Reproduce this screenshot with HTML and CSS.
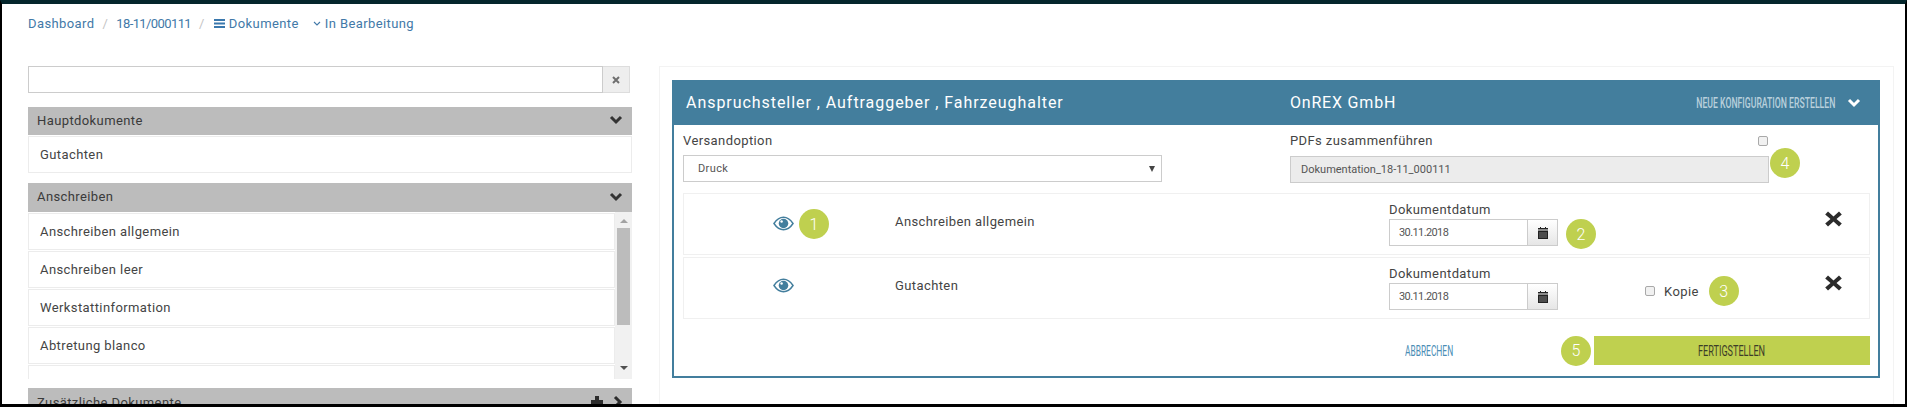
FILE: index.html
```html
<!DOCTYPE html>
<html lang="de">
<head>
  <meta charset="UTF-8" />
  <title>Dokumente</title>
  <link rel="stylesheet" href="styles.css">
</head>
<body>
  <div class="frame">
    <div class="breadcrumb">
      <a>Dashboard</a>
      <span class="sep">/</span>
      <a class="tight">18-11/000111</a>
      <span class="sep">/</span>
      <svg class="bars" viewBox="0 0 11 9"><path d="M0 0h11v2H0zM0 3.5h11v2H0zM0 7h11v2H0z"/></svg>
      <a>Dokumente</a>
      <svg class="caret" viewBox="0 0 8 5"><path d="M1 1l3 3 3-3" fill="none" stroke="currentColor" stroke-width="1.1"/></svg>
      <a>In Bearbeitung</a>
    </div>

    <div class="content">
      <div class="sidebar">
        <div class="search">
          <input class="search-input" type="text" />
          <span class="search-btn">
            <svg viewBox="0 0 8 8"><path d="M1 1l6 6M7 1L1 7" stroke="#6f6f6f" stroke-width="2"/></svg>
          </span>
        </div>

        <div class="group-head first">
          <span>Hauptdokumente</span>
          <svg class="chev" viewBox="0 0 14 10"><path d="M2 2l5 5 5-5" fill="none" stroke="currentColor" stroke-width="3"/></svg>
        </div>
        <div class="doc-item">Gutachten</div>

        <div class="group-head second">
          <span>Anschreiben</span>
          <svg class="chev" viewBox="0 0 14 10"><path d="M2 2l5 5 5-5" fill="none" stroke="currentColor" stroke-width="3"/></svg>
        </div>
        <div class="doc-scroll">
          <div class="doc-list">
            <div class="doc-item">Anschreiben allgemein</div>
            <div class="doc-item">Anschreiben leer</div>
            <div class="doc-item">Werkstattinformation</div>
            <div class="doc-item">Abtretung blanco</div>
            <div class="doc-item"></div>
          </div>
          <div class="scrollbar">
            <span class="arrow-up"></span>
            <span class="thumb"></span>
            <span class="arrow-down"></span>
          </div>
        </div>

        <div class="group-head third">
          <span>Zusätzliche Dokumente</span>
          <span class="head-icons">
            <svg class="plus" viewBox="0 0 12 12"><path d="M4 0h4v4h4v4H8v4H4V8H0V4h4z"/></svg>
            <svg class="chev-right" viewBox="0 0 10 14"><path d="M2 2l5 5-5 5" fill="none" stroke="currentColor" stroke-width="3"/></svg>
          </span>
        </div>
      </div>

      <div class="panel">
        <div class="box">
          <div class="box-head">
            <div class="box-title">Anspruchsteller , Auftraggeber , Fahrzeughalter</div>
            <div class="box-company">OnREX GmbH</div>
            <div class="box-new"><span class="condensed">NEUE KONFIGURATION ERSTELLEN</span></div>
            <svg class="box-chev" viewBox="0 0 14 10"><path d="M2 2l5 5 5-5" fill="none" stroke="currentColor" stroke-width="3"/></svg>
          </div>

          <div class="options">
            <div class="opt-left">
              <div class="label">Versandoption</div>
              <div class="select">Druck<span class="select-arrow"></span></div>
            </div>
            <div class="opt-right">
              <div class="label-row">
                <div class="label">PDFs zusammenführen</div>
                <span class="check"></span>
              </div>
              <div class="pdf-row">
                <div class="pdf-name">Dokumentation_18-11_000111</div>
                <span class="badge badge-four">4</span>
              </div>
            </div>
          </div>

          <div class="doc-row">
            <div class="eye-cell">
              <svg class="eye" viewBox="0 0 22 15"><path d="M1 7.5C4 3 7 1 11 1s7 2 10 6.500C18 12 15 14 11 14S4 12 1 7.500z" fill="none" stroke="#437e9d" stroke-width="1.500"/><circle cx="11" cy="7.500" r="5" fill="#437e9d"/><circle cx="9" cy="5.500" r="1.300" fill="#fff"/></svg>
              <span class="badge">1</span>
            </div>
            <div class="doc-name">Anschreiben allgemein</div>
            <div class="date-cell">
              <div class="label">Dokumentdatum</div>
              <div class="date-line">
                <div class="date-value">30.11.2018</div>
                <span class="date-btn">
                  <svg viewBox="0 0 10 12"><path d="M0 3.500h10V12H0zM0 1h2V0h1v1h4V0h1v1h2v1.500H0z" fill="#222"/><path d="M1 6h8M1 8h8M1 10h8" stroke="#fff" stroke-width=".4"/></svg>
                </span>
                <span class="badge">2</span>
              </div>
            </div>
            <div class="copy-cell"></div>
            <svg class="remove" viewBox="0 0 17 16"><path d="M3 .5l5.500 5 5.500-5 2.800 3L11.500 8l5.300 4.500-2.800 3-5.500-5-5.500 5-2.800-3L5.500 8 .2 3.500z" fill="#2b2b2b"/></svg>
          </div>

          <div class="doc-row">
            <div class="eye-cell eye-high">
              <svg class="eye" viewBox="0 0 22 15"><path d="M1 7.500C4 3 7 1 11 1s7 2 10 6.500C18 12 15 14 11 14S4 12 1 7.500z" fill="none" stroke="#437e9d" stroke-width="1.500"/><circle cx="11" cy="7.500" r="5" fill="#437e9d"/><circle cx="9" cy="5.500" r="1.300" fill="#fff"/></svg>
            </div>
            <div class="doc-name">Gutachten</div>
            <div class="date-cell">
              <div class="label">Dokumentdatum</div>
              <div class="date-line">
                <div class="date-value">30.11.2018</div>
                <span class="date-btn">
                  <svg viewBox="0 0 10 12"><path d="M0 3.500h10V12H0zM0 1h2V0h1v1h4V0h1v1h2v1.500H0z" fill="#222"/><path d="M1 6h8M1 8h8M1 10h8" stroke="#fff" stroke-width=".4"/></svg>
                </span>
              </div>
            </div>
            <div class="copy-cell">
              <span class="check"></span>
              <span class="copy-label">Kopie</span>
              <span class="badge">3</span>
            </div>
            <svg class="remove" viewBox="0 0 17 16"><path d="M3 .5l5.500 5 5.500-5 2.800 3L11.500 8l5.300 4.500-2.800 3-5.500-5-5.500 5-2.800-3L5.500 8 .2 3.500z" fill="#2b2b2b"/></svg>
          </div>

          <div class="box-foot">
            <a class="cancel"><span class="condensed">ABBRECHEN</span></a>
            <span class="badge">5</span>
            <div class="finish"><span class="condensed">FERTIGSTELLEN</span></div>
          </div>
        </div>
      </div>
    </div>
  </div>
</body>
</html>
```

FILE: styles.css
```css
* {
  box-sizing: border-box;
}

html,
body {
  margin: 0;
  height: 407px;
  overflow: hidden;
  background: #000;
}

.frame {
  height: 407px;
  background: #fff;
  border-top: 4px solid #04262c;
  border-left: 2px solid #000;
  border-right: 2px solid #000;
  border-bottom: 3px solid #000;
  overflow: hidden;
  font-family: Roboto, sans-serif;
  font-size: 13px;
  letter-spacing: 0.4px;
  color: #444;
}

.breadcrumb {
  display: flex;
  align-items: center;
  height: 40px;
  padding: 0 0 2px 26px;
  color: #4279a8;
}

.tight {
  letter-spacing: -0.6px;
}

.sep {
  margin: 0 8px;
  color: #c4c4c4;
}

.bars {
  width: 11px;
  height: 9px;
  margin: 0 4px 0 1px;
  fill: #3a78ad;
}

.caret {
  width: 8px;
  height: 5px;
  margin: 0 4px 0 14px;
}

.content {
  display: flex;
  align-items: flex-start;
  padding: 22px 11px 0 26px;
}

.sidebar {
  width: 604px;
  flex: none;
  margin-right: 27px;
}

.search {
  display: flex;
  height: 27px;
  width: 602px;
}

.search-input {
  flex: 1;
  border: 1px solid #ccc;
  background: #fff;
}

.search-btn {
  display: flex;
  align-items: center;
  justify-content: center;
  width: 27px;
  background: #eee;
  border: 1px solid #ddd;
  border-left: 0;
}

.search-btn svg {
  width: 8px;
  height: 8px;
}

.group-head {
  display: flex;
  align-items: center;
  justify-content: space-between;
  height: 28px;
  padding: 0 9px 2px;
  background: #bcbcbc;
  color: #3a3a3a;
}

.group-head.first {
  margin-top: 14px;
}

.group-head.second {
  margin-top: 10px;
  height: 29px;
}

.group-head.third {
  margin-top: 9px;
  padding-bottom: 0;
}

.chev {
  width: 14px;
  height: 10px;
  color: #333;
}

.head-icons {
  display: flex;
  align-items: center;
  gap: 10px;
}

.plus {
  width: 12px;
  height: 12px;
  fill: #2d2d2d;
}

.chev-right {
  width: 10px;
  height: 14px;
  color: #2d2d2d;
}

.doc-item {
  display: flex;
  align-items: center;
  height: 37px;
  margin-top: 1px;
  padding-left: 11px;
  border: 1px solid #ececec;
  background: #fff;
}

.doc-scroll {
  display: flex;
  height: 167px;
  overflow: hidden;
}

.doc-list {
  flex: 1;
}

.doc-list .doc-item {
  margin-top: 1px;
  margin-bottom: 1px;
}

.scrollbar {
  display: flex;
  flex-direction: column;
  align-items: center;
  justify-content: space-between;
  width: 17px;
  height: 167px;
  padding: 7px 0 9px;
  background: #f1f1f1;
}

.thumb {
  width: 13px;
  height: 97px;
  margin-top: -1px;
  margin-bottom: auto;
  background: #bcbcbc;
}

.arrow-up,
.arrow-down {
  width: 0;
  height: 0;
  border-left: 4px solid transparent;
  border-right: 4px solid transparent;
}

.arrow-up {
  margin-bottom: 6px;
  border-bottom: 4px solid #a3a3a3;
}

.arrow-down {
  border-top: 4px solid #505050;
}

.panel {
  flex: 1;
  height: 340px;
  padding: 13px 13px 0 12px;
  border: 1px solid #f3f3f3;
  border-bottom: 0;
}

.box {
  height: 298px;
  border: 2px solid #437e9d;
  border-top: 0;
}

.box-head {
  display: flex;
  align-items: center;
  height: 45px;
  margin: 0 -2px;
  padding: 0 19px 0 14px;
  background: #437e9d;
  color: #fff;
}

.box-title {
  width: 604px;
  font-size: 16px;
  letter-spacing: 0.95px;
}

.box-company {
  font-size: 16px;
  letter-spacing: 0.8px;
}

.box-new {
  display: flex;
  justify-content: flex-end;
  margin-left: auto;
  width: 140px;
  color: #b9d0dc;
  font-size: 14px;
  font-weight: 500;
}

.condensed {
  display: inline-block;
  flex: none;
  letter-spacing: 0;
  transform: scaleX(0.6);
  white-space: nowrap;
}

.box-new .condensed {
  transform: scaleX(0.62);
  transform-origin: right center;
}

.box-chev {
  width: 14px;
  height: 10px;
  margin-left: 12px;
}

.options {
  display: flex;
  height: 68px;
  padding-left: 9px;
}

.opt-left {
  width: 607px;
  padding-top: 7px;
}

.label {
  line-height: 18px;
}

.select {
  position: relative;
  display: flex;
  align-items: center;
  width: 479px;
  height: 27px;
  margin-top: 5px;
  padding-left: 14px;
  border: 1px solid #ccc;
  font-size: 11px;
  color: #555;
}

.select-arrow {
  position: absolute;
  right: 6px;
  top: 10px;
  border-left: 3px solid transparent;
  border-right: 3px solid transparent;
  border-top: 6px solid #444;
}

.opt-right {
  position: relative;
  padding-top: 7px;
}

.label-row {
  display: flex;
  align-items: center;
  justify-content: space-between;
  width: 478px;
}

.check {
  flex: none;
  width: 10px;
  height: 10px;
  border: 1px solid #a9a9a9;
  border-radius: 2px;
  background: #f1f1f1;
}

.pdf-row {
  display: flex;
  margin-top: 6px;
}

.pdf-name {
  display: flex;
  align-items: center;
  width: 479px;
  height: 27px;
  padding-left: 10px;
  border: 1px solid #ccc;
  background: #ececec;
  font-size: 11px;
  letter-spacing: 0;
  color: #555;
}

.badge {
  display: flex;
  align-items: center;
  justify-content: center;
  flex: none;
  width: 30px;
  height: 30px;
  border-radius: 50%;
  background: #bfd04f;
  color: #fff;
  font-size: 16px;
  font-weight: 300;
  letter-spacing: 0;
}

.badge-four {
  margin: -8px 0 0 1px;
}

.doc-row {
  display: flex;
  height: 62px;
  margin: 0 8px 2px 9px;
  border: 1px solid #f0f0f0;
}

.eye-cell {
  display: flex;
  align-items: center;
  gap: 5px;
  width: 211px;
  height: 60px;
  padding: 0 0 0 89px;
}

.eye {
  width: 21px;
  height: 15px;
  margin-top: -2px;
}

.eye-high .eye {
  margin-top: -6px;
}

.doc-name {
  width: 494px;
  padding-top: 20px;
}

.date-cell {
  width: 256px;
  padding-top: 7px;
}

.date-line {
  display: flex;
}

.date-value {
  display: flex;
  align-items: center;
  width: 139px;
  height: 27px;
  padding-left: 9px;
  border: 1px solid #ccc;
  font-size: 11px;
  letter-spacing: -0.6px;
  color: #555;
}

.date-btn {
  display: flex;
  align-items: center;
  justify-content: center;
  width: 30px;
  height: 27px;
  border: 1px solid #ccc;
  border-left: 0;
  background: linear-gradient(#fff, #e6e6e6);
}

.date-btn svg {
  width: 10px;
  height: 12px;
}

.date-line .badge {
  margin-left: 8px;
}

.copy-cell {
  display: flex;
  align-items: center;
  width: 180px;
  height: 60px;
  padding-top: 6px;
}

.copy-label {
  margin: 0 10px 0 9px;
}

.remove {
  flex: none;
  width: 17px;
  height: 16px;
  margin-top: 17px;
}

.box-foot {
  display: flex;
  align-items: center;
  height: 29px;
  margin: 17px 8px 0 0;
}

.cancel {
  margin-left: 731px;
  width: 49px;
  color: #4a8db5;
  font-size: 14px;
}

.cancel .condensed {
  transform-origin: left center;
}

.box-foot .badge {
  margin-left: 107px;
}

.finish {
  display: flex;
  align-items: center;
  justify-content: center;
  flex: 1;
  height: 29px;
  margin-left: 3px;
  background: #bfd04f;
  color: #3d3d28;
  font-size: 14px;
}

.finish .condensed {
  transform: scaleX(0.65);
}
```
